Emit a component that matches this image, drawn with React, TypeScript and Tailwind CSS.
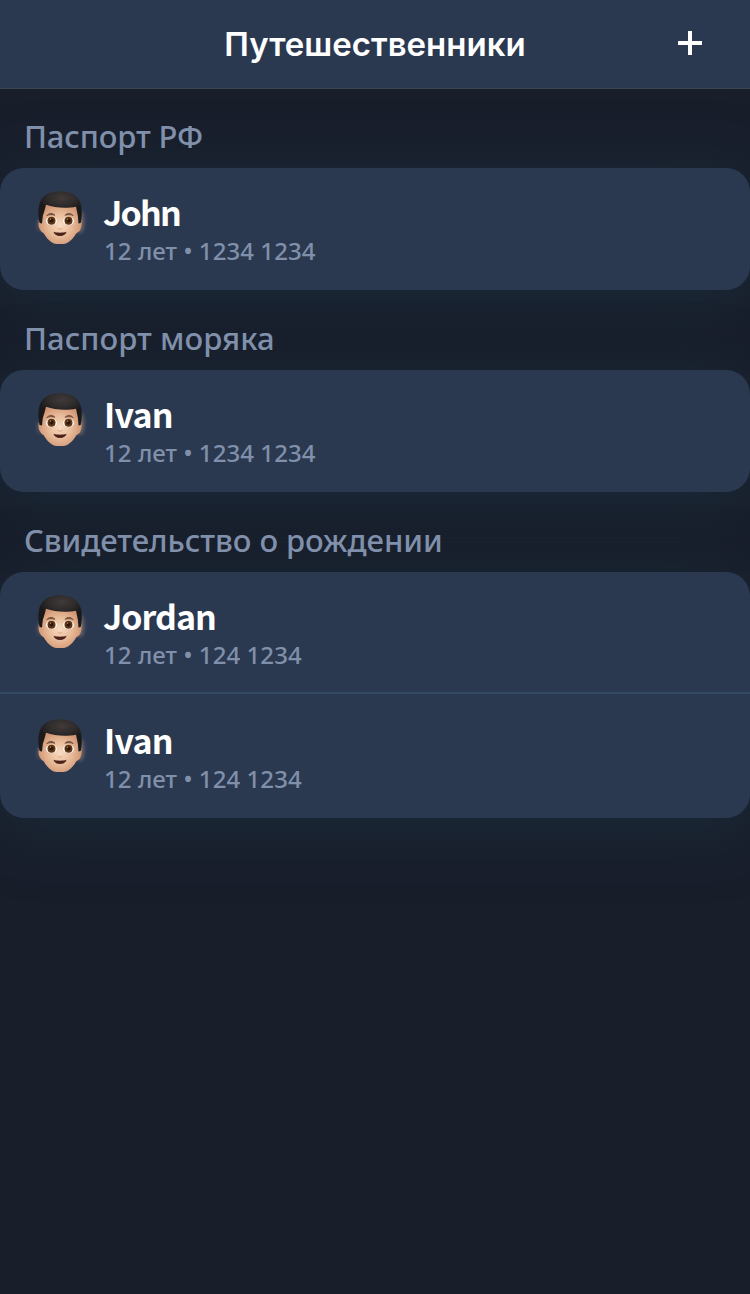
import React from 'react';

type Traveler = { name: string; details: string; tracking: string };
type Group = { title: string; tracking: string; travelers: Traveler[] };

const groups: Group[] = [
  {
    title: 'Паспорт РФ',
    tracking: 'tracking-[-0.15px]',
    travelers: [{ name: 'John', details: '12 лет • 1234 1234', tracking: '-ml-[1px] tracking-[-1.8px]' }],
  },
  {
    title: 'Паспорт моряка',
    tracking: 'tracking-[0.05px]',
    travelers: [{ name: 'Ivan', details: '12 лет • 1234 1234', tracking: 'tracking-[-0.8px]' }],
  },
  {
    title: 'Свидетельство о рождении',
    tracking: 'tracking-[-0.05px]',
    travelers: [
      { name: 'Jordan', details: '12 лет • 124 1234', tracking: '-ml-[1px] tracking-[-1px]' },
      { name: 'Ivan', details: '12 лет • 124 1234', tracking: 'tracking-[-0.8px]' },
    ],
  },
];

function FaceDefs() {
  return (
    <svg className="absolute size-0" aria-hidden="true">
      <defs>
        <radialGradient id="skin" gradientUnits="userSpaceOnUse" cx="40" cy="45" r="23">
          <stop offset="0" stopColor="#f7dcc2" />
          <stop offset="0.5" stopColor="#e8bc9a" />
          <stop offset="1" stopColor="#cf9270" />
        </radialGradient>
        <radialGradient id="hair" gradientUnits="userSpaceOnUse" cx="42" cy="18" r="24" gradientTransform="translate(0 8) scale(1 0.55)">
          <stop offset="0" stopColor="#403a39" />
          <stop offset="0.55" stopColor="#302c2c" />
          <stop offset="1" stopColor="#1b191a" />
        </radialGradient>
        <filter id="glow" x="-100%" y="-50%" width="300%" height="200%">
          <feGaussianBlur stdDeviation="2" />
        </filter>
      </defs>
    </svg>
  );
}

function Face() {
  return (
    <svg className="h-[60px] w-[60px] shrink-0" viewBox="10 8 60 60" aria-hidden="true">
      <ellipse cx="60" cy="42" rx="3.500" ry="11" fill="#d0a184" opacity="0.55" filter="url(#glow)" />
      <ellipse cx="20" cy="45" rx="2" ry="6" fill="#d0a184" opacity="0.4" filter="url(#glow)" />
      <path d="M20 38C18 40 18 47 20 49.500C21 51.500 22 52.500 23.500 53C26.500 58.500 32 64 36.500 64H43.500C48 64 53.500 58.500 56.500 53C58 52.500 60 51 60.500 49C62 46 62 40 60 38L58 24H22Z" fill="url(#skin)" />
      <path d="M19.500 43C18.500 38 17.800 31 19 26C20.500 16 29 11.200 40 11.200C52 11.200 59.500 16 61.200 26C62.300 32 61.800 38 60.700 43L58.500 43.500L57.900 36L56 26.800C47 28.400 35 28.200 26 24.800C25.200 28 24.600 31 22.800 36L22 43.500Z" fill="url(#hair)" />
      <path d="M26.800 35.600C29 32.700 33 32.800 35 35.300C32.500 34.400 29 34.500 26.800 35.600Z" fill="#765140" stroke="#765140" strokeWidth="0.900" />
      <path d="M45 35.300C47 32.800 51 32.700 53.200 35.600C51 34.500 47.500 34.400 45 35.300Z" fill="#765140" stroke="#765140" strokeWidth="0.900" />
      <ellipse cx="31.500" cy="41" rx="5.600" ry="4.200" fill="#fff7ed" />
      <ellipse cx="48.500" cy="41" rx="5.600" ry="4.200" fill="#fff7ed" />
      <circle cx="31.500" cy="40.700" r="4" fill="#5c3516" />
      <circle cx="48.500" cy="40.700" r="4" fill="#5c3516" />
      <circle cx="31.500" cy="40.500" r="2" fill="#2b170b" />
      <circle cx="48.500" cy="40.500" r="2" fill="#2b170b" />
      <circle cx="30.600" cy="39.200" r="0.600" fill="#c59b72" />
      <circle cx="47.600" cy="39.200" r="0.600" fill="#c59b72" />
      <path d="M37.500 48.200C39 49.500 41 49.500 42.500 48.200" fill="none" stroke="#dfa47f" strokeWidth="1" />
      <path d="M33.500 51.800C37 53 43 53 46.600 51.800C46 54.500 43.500 56 40 56C36.500 56 34 54.500 33.500 51.800Z" fill="#4c211a" />
    </svg>
  );
}

function TravelerRow({ traveler }: { traveler: Traveler }) {
  return (
    <li className="flex h-[122px] items-start border-[#344a63] pt-5 pl-[30px] not-first:h-[124px] not-first:pt-[22px] not-last:border-b-2">
      <Face />
      <div className="flex flex-col pl-[14px]">
        <span
          className={`h-[47px] font-['Noto_Sans_CJK_SC',sans-serif] text-[34px] leading-[48px] font-bold text-white ${traveler.tracking}`}
        >
          {traveler.name}
        </span>
        <span className="h-8 text-[24px] leading-8 font-medium tracking-[0.07px] text-[#8090ab]">{traveler.details}</span>
      </div>
    </li>
  );
}

export default function App() {
  return (
    <div className="relative h-[1294px] w-full overflow-hidden bg-[#191e2b] font-['Noto_Sans',sans-serif] whitespace-nowrap">
      <FaceDefs />
      <header className="relative z-10 grid h-[89px] grid-cols-[1fr_auto_1fr] items-center border-b border-[#394550] bg-[#2a3950]">
        <h1 className="col-start-2 font-['Inter',sans-serif] text-[33px] leading-[44px] font-semibold text-white">Путешественники</h1>
        <button aria-label="Добавить" className="mr-[48px] mb-[2px] justify-self-end">
          <svg className="size-6" viewBox="0 0 24 24">
            <path d="M12 0V24M0 12H24" stroke="#fff" strokeWidth="4" />
          </svg>
        </button>
      </header>
      <main className="-mt-px">
        {groups.map((group) => (
          <section key={group.title}>
            <h2 className={`relative z-10 flex h-20 items-end pb-[11px] pl-6 text-[31px] leading-[42px] font-medium text-[#8090ab] ${group.tracking}`}>{group.title}</h2>
            <ul className="rounded-[24px] bg-[#2a3950] shadow-[0_8px_64px_rgba(27,48,63,0.75)]">
              {group.travelers.map((traveler, i) => (
                <TravelerRow key={i} traveler={traveler} />
              ))}
            </ul>
          </section>
        ))}
      </main>
    </div>
  );
}
